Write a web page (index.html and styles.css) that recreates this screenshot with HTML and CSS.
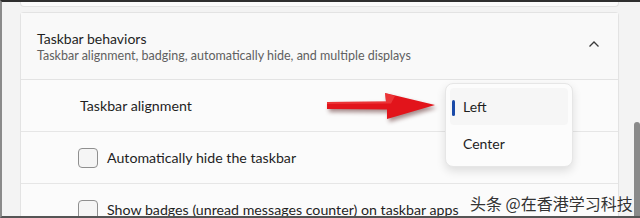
FILE: index.html
```html
<!DOCTYPE html>
<html>
<head>
<meta charset="utf-8">
<link rel="stylesheet" href="styles.css">
</head>
<body>
<div class="window">
  <div class="content">
    <div class="prev-card"></div>
    <div class="card">
      <div class="card-header">
        <div class="header-text">
          <div class="title">Taskbar behaviors</div>
          <div class="subtitle">Taskbar alignment, badging, automatically hide, and multiple displays</div>
        </div>
        <svg class="chevron" width="12" height="8" viewBox="0 0 12 8"><path d="M1.5 6.5 L6 2 L10.5 6.5" fill="none" stroke="#3a3a3a" stroke-width="1.3"/></svg>
      </div>
      <div class="row row-label">Taskbar alignment</div>
      <div class="row"><span class="checkbox"></span><span>Automatically hide the taskbar</span></div>
      <div class="row"><span class="checkbox"></span><span>Show badges (unread messages counter) on taskbar apps</span></div>
    </div>
  </div>
  <div class="gutter"><div class="thumb"></div></div>

  <div class="menu">
    <div class="menu-item active"><span class="accent"></span>Left</div>
    <div class="menu-item">Center</div>
  </div>

  <svg class="arrow" width="120" height="36" viewBox="0 0 120 36">
    <path d="M2 12 L61 11.5 L60 3 L110 15 L62 29 L62 19.5 L2 19 Z" fill="#e2141b"/>
    <path d="M2 12 L61 11.5 L60 3 L70 6 L66 13.5 L2 14 Z" fill="#f14a4a" opacity="0.6"/>
  </svg>

  <div class="watermark">头条 @在香港学习科技</div>
</div>
</body>
</html>
```
FILE: styles.css
```css
html, body {
  margin: 0;
  padding: 0;
  background: #f3f3f3;
}
body {
  font-family: "Lato", "Noto Sans", sans-serif;
  color: #1b1b1b;
}
.window {
  position: relative;
  width: 640px;
  height: 218px;
  box-sizing: border-box;
  border-top: 2px solid #2e2e2e;
  border-left: 2px solid #8a8a8a;
  border-bottom: 2px solid #555;
  background: #f3f3f3;
  display: flex;
  overflow: hidden;
}
.content {
  width: 617px;
  padding-left: 18px;
  box-sizing: border-box;
}
.prev-card {
  height: 4px;
  background: #fbfbfb;
  border: 1px solid #e3e3e3;
  border-top: none;
  border-radius: 0 0 4px 4px;
}
.card {
  margin-top: 5px;
  background: #fbfbfb;
  border: 1px solid #e3e3e3;
  border-bottom: none;
  border-radius: 4px 4px 0 0;
}
.card-header {
  height: 66px;
  display: flex;
  align-items: center;
  padding: 0 18px 0 16px;
  background: #f9f9f9;
  border-bottom: 1px solid #e3e3e3;
}
.header-text {
  flex: 1;
  padding-top: 1px;
}
.title {
  font-size: 14px;
  line-height: 18px;
  color: #1f1f1f;
}
.subtitle {
  font-size: 12.5px;
  line-height: 16px;
  color: #606060;
}
.chevron {
  margin-top: -4px;
}
.row {
  height: 51px;
  display: flex;
  align-items: center;
  padding-left: 57px;
  font-size: 14.2px;
  color: #1f1f1f;
  border-bottom: 1px solid #e6e6e6;
}
.row-label {
  padding-left: 59px;
}
.checkbox {
  width: 18px;
  height: 18px;
  border: 1px solid #8f8f8f;
  border-radius: 4px;
  background: #f5f5f5;
  margin-right: 9px;
  flex: none;
}
.gutter {
  flex: 1;
  position: relative;
  background: #f3f3f3;
}
.thumb {
  position: absolute;
  right: 0;
  top: 120px;
  bottom: 0;
  width: 6px;
  background: #8a8a8a;
  border-radius: 3px 3px 0 0;
}
.menu {
  position: absolute;
  left: 443px;
  top: 81px;
  width: 128px;
  height: 84px;
  box-sizing: border-box;
  background: #fcfcfc;
  border: 1px solid #e6e6e6;
  border-radius: 8px;
  box-shadow: 0 4px 10px rgba(0,0,0,0.12);
  padding: 4px;
  display: flex;
  flex-direction: column;
}
.menu-item {
  position: relative;
  flex: 1;
  display: flex;
  align-items: center;
  padding-left: 13px;
  font-size: 14px;
  color: #1f1f1f;
  border-radius: 4px;
}
.menu-item.active {
  background: #f6f6f6;
}
.accent {
  position: absolute;
  left: 2px;
  top: 12px;
  width: 3px;
  height: 16px;
  border-radius: 2px;
  background: #1a4aa8;
}
.arrow {
  position: absolute;
  left: 323px;
  top: 88px;
  filter: drop-shadow(2px 3px 2px rgba(60,0,0,0.45));
}
.watermark {
  position: absolute;
  left: 468px;
  top: 189px;
  font-family: "Noto Sans CJK SC", sans-serif;
  font-size: 16px;
  line-height: 24px;
  color: #333;
  text-shadow: 0 0 2px #fff, 0 0 2px #fff;
  white-space: nowrap;
}
```
